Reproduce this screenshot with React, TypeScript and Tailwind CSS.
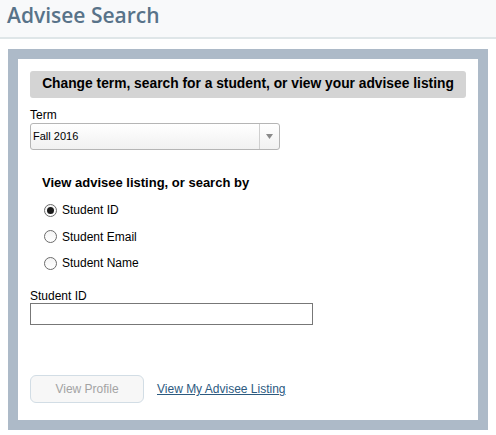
import React from "react";

function Radio({ checked, label }: { checked?: boolean; label: string }) {
  return (
    <div className="flex items-center h-[14px]">
      <span className="w-[13px] h-[13px] rounded-full border border-[#6b6b6b] bg-gradient-to-b from-[#f4f4f4] to-white flex items-center justify-center">
        {checked && <span className="w-[7px] h-[7px] rounded-full bg-[#1a1a1a]" />}
      </span>
      <span className="ml-[5px] text-[12px] leading-[14px] text-black">{label}</span>
    </div>
  );
}

export default function App() {
  return (
    <div className="w-[496px] h-[435px] bg-white overflow-hidden" style={{ fontFamily: '"Liberation Sans", Arial, sans-serif' }}>
      <div className="h-[39px] bg-[#f8f9fa] border-b-2 border-[#dfe6e8] pl-[7px] flex items-start">
        <span className="text-[21px] leading-[31px] font-semibold text-[#587389]" style={{ fontFamily: '"Open Sans", sans-serif' }}>
          Advisee Search
        </span>
      </div>
      <div className="pt-[10px] px-[8px]">
        <div className="border-[10px] border-[#adbac8] bg-white px-[12px] pt-[12px] pb-[17px] flex flex-col">
          <div className="h-[27px] rounded-[3px] bg-[#d4d4d4] flex items-center justify-center text-[13.8px] font-bold text-black">
            Change term, search for a student, or view your advisee listing
          </div>
          <div className="mt-[10px] text-[12px] leading-[14px] text-black">Term</div>
          <div className="mt-[1px] w-[250px] h-[27px] rounded-[3px] border border-[#b5b5b5] bg-gradient-to-b from-white to-[#f1f1f1] flex">
            <div className="flex-1 flex items-center pl-[2px] text-[11px] text-black">Fall 2016</div>
            <div className="w-[20px] border-l border-[#cfcfcf] flex items-center justify-center">
              <svg width="7" height="5" viewBox="0 0 7 5">
                <path d="M0 0 L7 0 L3.5 5 Z" fill="#8a8a8a" />
              </svg>
            </div>
          </div>
          <div className="mt-[25px] ml-[12px] text-[13px] leading-[16px] font-bold text-black">
            View advisee listing, or search by
          </div>
          <div className="mt-[12px] ml-[14px] flex flex-col gap-[12.5px]">
            <Radio checked label="Student ID" />
            <Radio label="Student Email" />
            <Radio label="Student Name" />
          </div>
          <div className="mt-[19px] text-[12px] leading-[14px] text-black">Student ID</div>
          <div className="w-[283px] h-[22px] border border-[#777777] bg-white" />
          <div className="mt-[50px] flex items-center">
            <button className="w-[114px] h-[28px] rounded-[6px] border border-[#d2dde5] bg-[#f7f7f7] text-[12px] text-[#a3a3a3]">
              View Profile
            </button>
            <a className="ml-[13px] text-[12px] text-[#2c5a7f] underline">View My Advisee Listing</a>
          </div>
        </div>
      </div>
    </div>
  );
}
